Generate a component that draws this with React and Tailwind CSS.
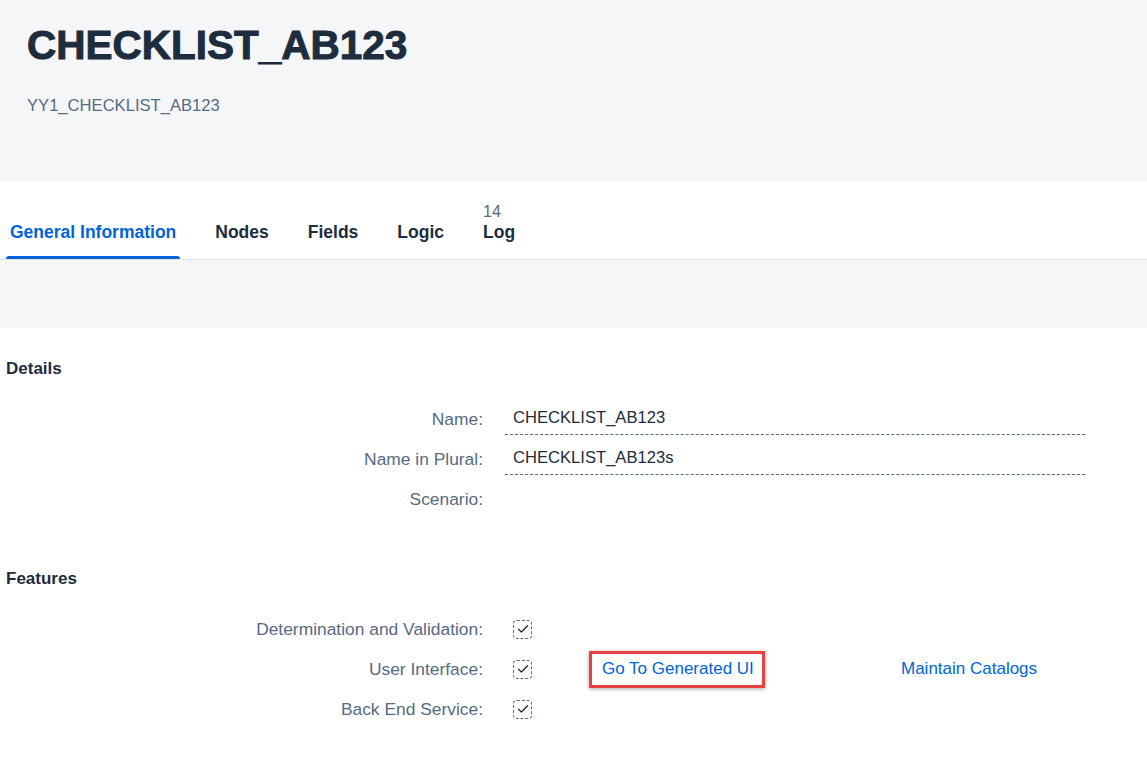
import { useState } from "react";

const TABS = [
  { label: "General Information" },
  { label: "Nodes" },
  { label: "Fields" },
  { label: "Logic" },
  { label: "Log", count: "14" },
];

function Check() {
  return (
    <span className="w-[19px] h-[19px] rounded-[4px] border border-dashed border-[#556b82] flex items-center justify-center">
      <svg width="12" height="10" viewBox="0 0 12 10" fill="none">
        <path d="M1.5 5.2 L4.5 8 L10.5 1.8" stroke="#1d2d3e" strokeWidth="1.4" strokeLinecap="round" strokeLinejoin="round" />
      </svg>
    </span>
  );
}

function Label({ children }) {
  return <div className="w-[477px] text-right text-[17.4px] text-[#556b82]">{children}</div>;
}

export default function App() {
  const [active] = useState(0);

  return (
    <div className="min-h-screen bg-white font-['Liberation_Sans',Arial,sans-serif] text-[16px]">
      {/* Object header */}
      <div className="h-[182px] bg-[#f5f6f7] pl-[27px] pt-[25px]">
        <h1 className="text-[40.5px] leading-[40px] font-bold text-[#1d2d3e] [-webkit-text-stroke:1px_#1d2d3e]">
          CHECKLIST_AB123
        </h1>
        <p className="mt-[31px] text-[16.6px] leading-[20px] text-[#556b82]">YY1_CHECKLIST_AB123</p>
      </div>

      {/* Tabs */}
      <div className="h-[78px] bg-white border-b border-[#e5e5e5] flex items-end px-[6px] gap-[31px]">
        {TABS.map((t, i) => (
          <div key={t.label} className="flex flex-col">
            <div className="px-1">
              {t.count && <div className="text-[16px] leading-[20px] text-[#556b82] -mb-[1px]">{t.count}</div>}
              <div
                className={
                  "text-[17.5px] leading-[22px] font-bold " +
                  (i === active ? "text-[#0064d9]" : "text-[#1d2d3e]")
                }
              >
                {t.label}
              </div>
            </div>
            <div className={"mt-[13px] h-[3px] rounded-t-[3px] " + (i === active ? "bg-[#0064d9]" : "bg-transparent")} />
          </div>
        ))}
      </div>

      <div className="h-[68px] bg-[#f5f6f7]" />

      {/* Details */}
      <div className="px-[6px] pt-[31px]">
        <h2 className="text-[17px] leading-[20px] font-bold text-[#1d2d3e]">Details</h2>
        <div className="mt-[20px]">
          <div className="flex items-center h-[40px]">
            <Label>Name:</Label>
            <div className="ml-[22px] w-[580px] h-[32px] flex items-center px-2 text-[16.6px] text-[#1d2d3e] border-b border-dashed border-[#556b82]">
              CHECKLIST_AB123
            </div>
          </div>
          <div className="flex items-center h-[40px]">
            <Label>Name in Plural:</Label>
            <div className="ml-[22px] w-[580px] h-[32px] flex items-center px-2 text-[16.6px] text-[#1d2d3e] border-b border-dashed border-[#556b82]">
              CHECKLIST_AB123s
            </div>
          </div>
          <div className="flex items-center h-[40px]">
            <Label>Scenario:</Label>
          </div>
        </div>

        {/* Features */}
        <h2 className="mt-[50px] text-[17px] leading-[20px] font-bold text-[#1d2d3e]">Features</h2>
        <div className="mt-[20px]">
          <div className="flex items-center h-[40px]">
            <Label>Determination and Validation:</Label>
            <div className="ml-[30px]"><Check /></div>
          </div>
          <div className="flex items-center h-[40px]">
            <Label>User Interface:</Label>
            <div className="ml-[30px]"><Check /></div>
            <div className="ml-[57px] w-[176px] h-[37px] border-[3px] border-[#e8413e] shadow-[0_1px_4px_rgba(0,0,0,0.35)] flex items-center pl-[10px]">
              <a href="#" className="text-[17px] text-[#0064d9]">Go To Generated UI</a>
            </div>
            <a href="#" className="ml-[136px] text-[17px] text-[#0064d9]">Maintain Catalogs</a>
          </div>
          <div className="flex items-center h-[40px]">
            <Label>Back End Service:</Label>
            <div className="ml-[30px]"><Check /></div>
          </div>
        </div>
      </div>
    </div>
  );
}
